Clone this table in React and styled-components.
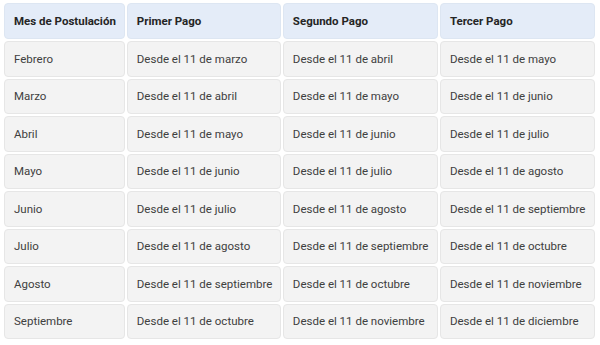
import React from 'react';
import styled, { createGlobalStyle } from 'styled-components';

const GlobalStyle = createGlobalStyle`
  body {
    margin: 0;
    background: #ffffff;
    font-family: Roboto, 'Liberation Sans', sans-serif;
  }
`;

// Separate cells with a small gap, like cards in a grid
const Table = styled.table`
  border-collapse: separate;
  border-spacing: 2px;
  margin: 1px 0 0 2px;
  table-layout: fixed;
  width: 595px;
`;

const HeadCell = styled.th`
  box-sizing: border-box;
  height: 36px;
  padding: 0 9px;
  text-align: left;
  font-size: 11.5px;
  font-weight: 700;
  color: #252525;
  background: #e4ecf8;
  border: 1px solid #dde6f2;
  border-radius: 4px;
  white-space: nowrap;
`;

const Cell = styled.td`
  box-sizing: border-box;
  height: 35.5px;
  padding: 0 9px;
  font-size: 11.5px;
  color: #404040;
  background: #f3f3f3;
  border: 1px solid #e6e6e6;
  border-radius: 4px;
  white-space: nowrap;
`;

const columns = [
  { label: 'Mes de Postulación', width: 120 },
  { label: 'Primer Pago', width: 153 },
  { label: 'Segundo Pago', width: 154 },
  { label: 'Tercer Pago', width: 154 },
];

const rows = [
  ['Febrero', 'marzo', 'abril', 'mayo'],
  ['Marzo', 'abril', 'mayo', 'junio'],
  ['Abril', 'mayo', 'junio', 'julio'],
  ['Mayo', 'junio', 'julio', 'agosto'],
  ['Junio', 'julio', 'agosto', 'septiembre'],
  ['Julio', 'agosto', 'septiembre', 'octubre'],
  ['Agosto', 'septiembre', 'octubre', 'noviembre'],
  ['Septiembre', 'octubre', 'noviembre', 'diciembre'],
];

const App = () => (
  <>
    <GlobalStyle />
    <Table>
      <colgroup>
        {columns.map((c) => (
          <col key={c.label} style={{ width: c.width }} />
        ))}
      </colgroup>
      <thead>
        <tr>
          {columns.map((c) => (
            <HeadCell key={c.label}>{c.label}</HeadCell>
          ))}
        </tr>
      </thead>
      <tbody>
        {rows.map(([month, ...pays]) => (
          <tr key={month}>
            <Cell>{month}</Cell>
            {pays.map((p) => (
              <Cell key={p}>Desde el 11 de {p}</Cell>
            ))}
          </tr>
        ))}
      </tbody>
    </Table>
  </>
);

export default App;
